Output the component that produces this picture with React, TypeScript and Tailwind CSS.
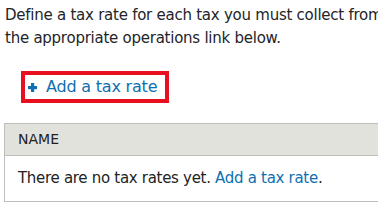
import React from "react";

export default function App() {
  return (
    <div className="w-[378px] h-[211px] overflow-hidden bg-white text-[#222330]" style={{ fontFamily: '"DejaVu Sans", sans-serif' }}>
      <p className="pl-[5px] pt-[4px] text-[15px] leading-[23px] tracking-[-0.25px] whitespace-nowrap text-[#232429]">
        Define a tax rate for each tax you must collect from
        <br />
        the appropriate operations link below.
      </p>
      <div className="pl-[21px] pt-[21px]">
        <a className="inline-flex items-center h-[32px] w-[148px] border-[4px] border-[#e8101e] text-[16px] tracking-[-0.2px] text-[#0f6fb0]">
          <svg width="9" height="9" viewBox="0 0 9 9" className="ml-[3px] mr-[9px]">
            <rect x="3" y="0" width="3.2" height="9" fill="#0f6fb0" />
            <rect x="0" y="3" width="9" height="3.2" fill="#0f6fb0" />
          </svg>
          <span>Add a tax rate</span>
        </a>
      </div>
      <div className="ml-[4px] mt-[20px] border border-[#bfbfba] border-r-0">
        <div className="h-[32px] bg-[#e1e2dc] border-b border-[#bfbfba] pl-[13px] flex items-center text-[14px] text-[#222]">
          NAME
        </div>
        <div className="h-[45px] pl-[13px] flex items-center text-[15px] tracking-[-0.3px] text-[#222]">
          There are no tax rates yet.&nbsp;<a className="text-[#0f6fb0]">Add a tax rate</a>.
        </div>
      </div>
    </div>
  );
}
